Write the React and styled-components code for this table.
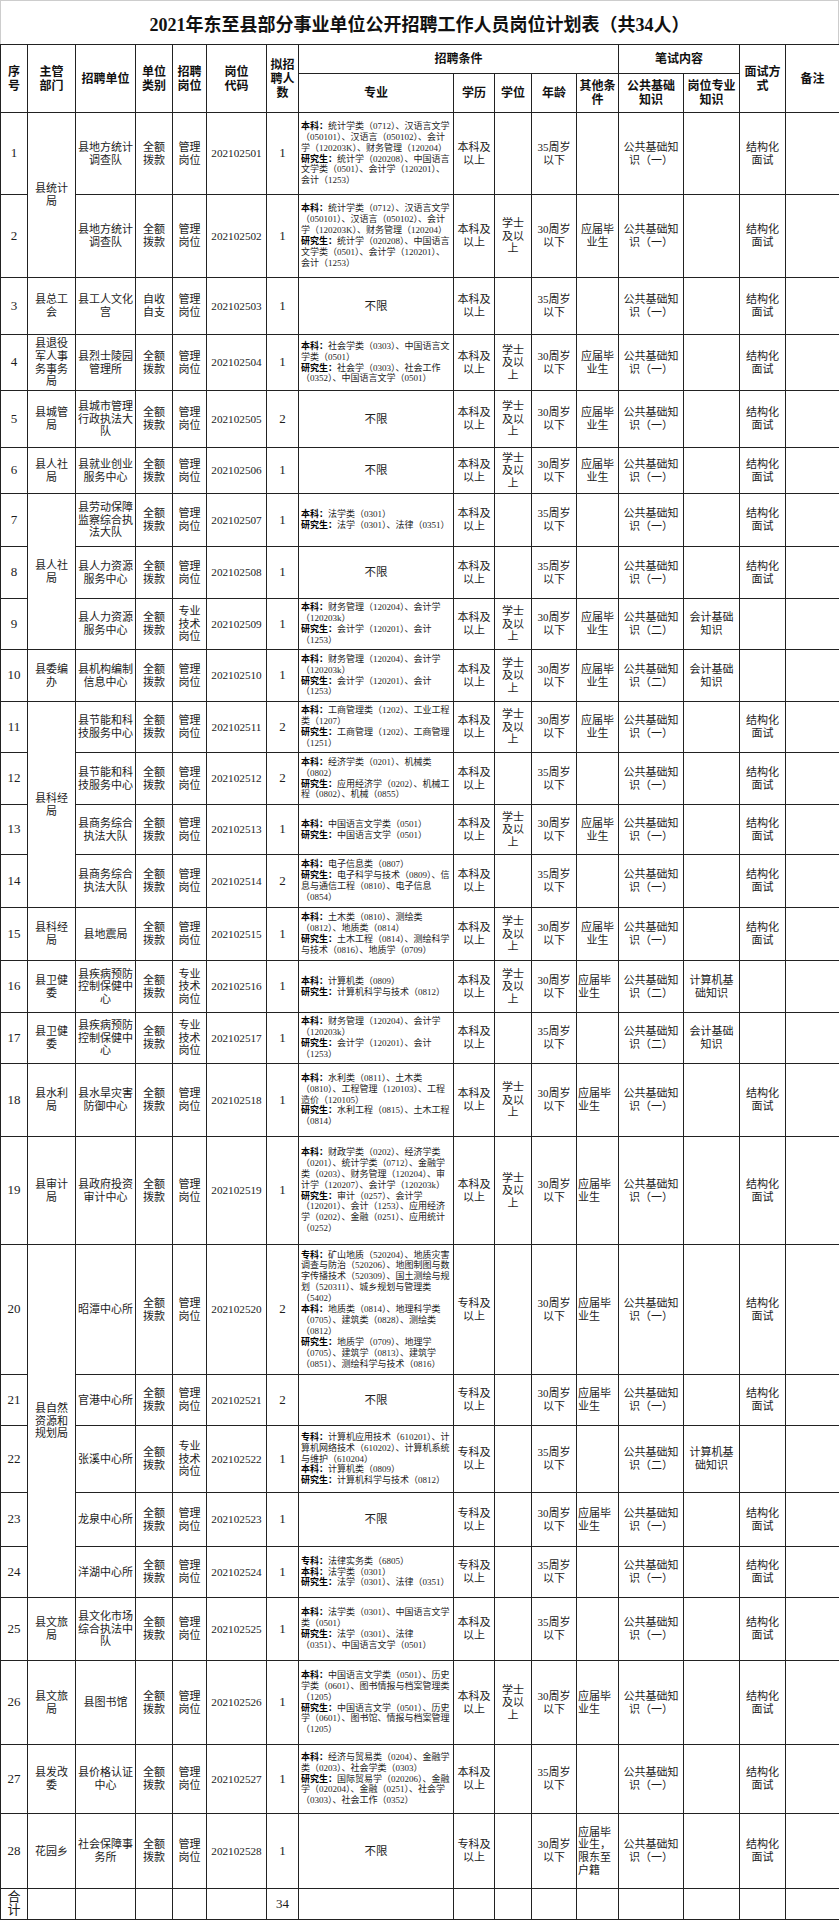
import React from 'react';
import styled, { createGlobalStyle } from 'styled-components';

const GlobalStyle = createGlobalStyle`
  body {
    margin: 0;
    background: #ffffff;
  }
`;

const Page = styled.div`
  width: 839px;
  font-family: "Liberation Serif", "Noto Sans CJK SC", serif;
  color: #1c1c1c;
`;

const Title = styled.div`
  height: 44px;
  box-sizing: border-box;
  border: 1px solid #cdcdcd;
  border-bottom: none;
  display: flex;
  align-items: center;
  justify-content: center;
  font-size: 18px;
  font-weight: 700;
  color: #111;
`;

const Table = styled.table`
  width: 839px;
  border-collapse: collapse;
  table-layout: fixed;
`;

const Row = styled.tr`
  height: ${p => p.$h}px;
`;

const HeadCell = styled.th`
  border: 1px solid #222;
  padding: 0 1px;
  font-size: 12px;
  line-height: 14px;
  font-weight: 700;
  text-align: center;
  vertical-align: middle;
  white-space: pre-line;
  color: #111;
`;

const Cell = styled.td`
  border: 1px solid #222;
  padding: 0 1px;
  font-size: 11px;
  line-height: 12.6px;
  text-align: ${p => (p.$left ? 'left' : 'center')};
  vertical-align: middle;
  white-space: pre-line;
  overflow: hidden;
`;

const NumCell = styled(Cell)`
  font-size: 13px;
`;

const CodeCell = styled(Cell)`
  font-size: 11.2px;
  padding: 0;
  white-space: nowrap;
`;

const MajorCell = styled.td`
  border: 1px solid #222;
  padding: 0 2px;
  font-size: 9px;
  line-height: 10.9px;
  text-align: ${p => (p.$free ? 'center' : 'left')};
  vertical-align: middle;
  overflow: hidden;
  ${p => p.$free && 'font-size: 11.5px;'}
`;

const Label = styled.b`
  font-weight: 700;
  color: #000;
`;

const cols = [27, 48, 60, 37, 34, 60, 32, 155, 41, 37, 45, 42, 65, 56, 46, 54];

const QE = '全额\n拨款';
const GL = '管理\n岗位';
const ZJ = '专业\n技术\n岗位';
const BK = '本科及\n以上';
const ZK = '专科及\n以上';
const XS = '学士\n及以\n上';
const A30 = '30周岁\n以下';
const A35 = '35周岁\n以下';
const YJ = '应届毕\n业生';
const P1 = '公共基础知\n识（一）';
const P2 = '公共基础知\n识（二）';
const IV = '结构化\n面试';

const rows = [
  { h: 82, dept: '县统计\n局', span: 2, unit: '县地方统计\n调查队', kind: QE, post: GL, num: 1,
    major: [['本科：', '统计学类（0712）、汉语言文学（050101）、汉语言（050102）、会计学（120203K）、财务管理（120204）'], ['研究生：', '统计学（020208）、中国语言文学类（0501）、会计学（120201）、会计（1253）']],
    edu: BK, deg: '', age: A35, other: '', pub: P1, prof: '', iv: IV },
  { h: 83, unit: '县地方统计\n调查队', kind: QE, post: GL, num: 1,
    major: [['本科：', '统计学类（0712）、汉语言文学（050101）、汉语言（050102）、会计学（120203K）、财务管理（120204）'], ['研究生：', '统计学（020208）、中国语言文学类（0501）、会计学（120201）、会计（1253）']],
    edu: BK, deg: XS, age: A30, other: YJ, pub: P1, prof: '', iv: IV },
  { h: 57, dept: '县总工\n会', unit: '县工人文化\n宫', kind: '自收\n自支', post: GL, num: 1, major: '不限',
    edu: BK, deg: '', age: A35, other: '', pub: P1, prof: '', iv: IV },
  { h: 56, dept: '县退役\n军人事\n务事务\n局', unit: '县烈士陵园\n管理所', kind: QE, post: GL, num: 1,
    major: [['本科：', '社会学类（0303）、中国语言文学类（0501）'], ['研究生：', '社会学（0303）、社会工作（0352）、中国语言文学（0501）']],
    edu: BK, deg: XS, age: A30, other: YJ, pub: P1, prof: '', iv: IV },
  { h: 57, dept: '县城管\n局', unit: '县城市管理\n行政执法大\n队', kind: QE, post: GL, num: 2, major: '不限',
    edu: BK, deg: XS, age: A30, other: YJ, pub: P1, prof: '', iv: IV },
  { h: 46, dept: '县人社\n局', unit: '县就业创业\n服务中心', kind: QE, post: GL, num: 1, major: '不限',
    edu: BK, deg: XS, age: A30, other: YJ, pub: P1, prof: '', iv: IV },
  { h: 53, dept: '县人社\n局', span: 3, unit: '县劳动保障\n监察综合执\n法大队', kind: QE, post: GL, num: 1,
    major: [['本科：', '法学类（0301）'], ['研究生：', '法学（0301）、法律（0351）']],
    edu: BK, deg: '', age: A35, other: '', pub: P1, prof: '', iv: IV },
  { h: 52, unit: '县人力资源\n服务中心', kind: QE, post: GL, num: 1, major: '不限',
    edu: BK, deg: '', age: A35, other: '', pub: P1, prof: '', iv: IV },
  { h: 51, unit: '县人力资源\n服务中心', kind: QE, post: ZJ, num: 1,
    major: [['本科：', '财务管理（120204）、会计学（120203k）'], ['研究生：', '会计学（120201）、会计（1253）']],
    edu: BK, deg: XS, age: A30, other: YJ, pub: P2, prof: '会计基础\n知识', iv: '' },
  { h: 52, dept: '县委编\n办', unit: '县机构编制\n信息中心', kind: QE, post: GL, num: 1,
    major: [['本科：', '财务管理（120204）、会计学（120203k）'], ['研究生：', '会计学（120201）、会计（1253）']],
    edu: BK, deg: XS, age: A30, other: YJ, pub: P2, prof: '会计基础\n知识', iv: '' },
  { h: 51, dept: '县科经\n局', span: 4, unit: '县节能和科\n技服务中心', kind: QE, post: GL, num: 2,
    major: [['本科：', '工商管理类（1202）、工业工程类（1207）'], ['研究生：', '工商管理（1202）、工商管理（1251）']],
    edu: BK, deg: XS, age: A30, other: YJ, pub: P1, prof: '', iv: IV },
  { h: 52, unit: '县节能和科\n技服务中心', kind: QE, post: GL, num: 2,
    major: [['本科：', '经济学类（0201）、机械类（0802）'], ['研究生：', '应用经济学（0202）、机械工程（0802）、机械（0855）']],
    edu: BK, deg: '', age: A35, other: '', pub: P1, prof: '', iv: IV },
  { h: 50, unit: '县商务综合\n执法大队', kind: QE, post: GL, num: 1,
    major: [['本科：', '中国语言文学类（0501）'], ['研究生：', '中国语言文学（0501）']],
    edu: BK, deg: XS, age: A30, other: YJ, pub: P1, prof: '', iv: IV },
  { h: 53, unit: '县商务综合\n执法大队', kind: QE, post: GL, num: 2,
    major: [['本科：', '电子信息类（0807）'], ['研究生：', '电子科学与技术（0809）、信息与通信工程（0810）、电子信息（0854）']],
    edu: BK, deg: '', age: A35, other: '', pub: P1, prof: '', iv: IV },
  { h: 53, dept: '县科经\n局', unit: '县地震局', kind: QE, post: GL, num: 1,
    major: [['本科：', '土木类（0810）、测绘类（0812）、地质类（0814）'], ['研究生：', '土木工程（0814）、测绘科学与技术（0816）、地质学（0709）']],
    edu: BK, deg: XS, age: A30, other: YJ, pub: P1, prof: '', iv: IV },
  { h: 52, dept: '县卫健\n委', unit: '县疾病预防\n控制保健中\n心', kind: QE, post: ZJ, num: 1,
    major: [['本科：', '计算机类（0809）'], ['研究生：', '计算机科学与技术（0812）']],
    edu: BK, deg: XS, age: A30, other: YJ, left: true, pub: P2, prof: '计算机基\n础知识', iv: '' },
  { h: 51, dept: '县卫健\n委', unit: '县疾病预防\n控制保健中\n心', kind: QE, post: ZJ, num: 1,
    major: [['本科：', '财务管理（120204）、会计学（120203k）'], ['研究生：', '会计学（120201）、会计（1253）']],
    edu: BK, deg: '', age: A35, other: '', pub: P2, prof: '会计基础\n知识', iv: '' },
  { h: 73, dept: '县水利\n局', unit: '县水旱灾害\n防御中心', kind: QE, post: GL, num: 1,
    major: [['本科：', '水利类（0811）、土木类（0810）、工程管理（120103）、工程造价（120105）'], ['研究生：', '水利工程（0815）、土木工程（0814）']],
    edu: BK, deg: XS, age: A30, other: YJ, left: true, pub: P1, prof: '', iv: IV },
  { h: 108, dept: '县审计\n局', unit: '县政府投资\n审计中心', kind: QE, post: GL, num: 1,
    major: [['本科：', '财政学类（0202）、经济学类（0201）、统计学类（0712）、金融学类（0203）、财务管理（120204）、审计学（120207）、会计学（120203k）'], ['研究生：', '审计（0257）、会计学（120201）、会计（1253）、应用经济学（0202）、金融（0251）、应用统计（0252）']],
    edu: BK, deg: XS, age: A30, other: YJ, left: true, pub: P1, prof: '', iv: IV },
  { h: 130, dept: '县自然\n资源和\n规划局', span: 5, unit: '昭潭中心所', kind: QE, post: GL, num: 2,
    major: [['专科：', '矿山地质（520204）、地质灾害调查与防治（520206）、地图制图与数字传播技术（520309）、国土测绘与规划（520311）、城乡规划与管理类（5402）'], ['本科：', '地质类（0814）、地理科学类（0705）、建筑类（0828）、测绘类（0812）'], ['研究生：', '地质学（0709）、地理学（0705）、建筑学（0813）、建筑学（0851）、测绘科学与技术（0816）']],
    edu: ZK, deg: '', age: A30, other: YJ, left: true, pub: P1, prof: '', iv: IV },
  { h: 51, unit: '官港中心所', kind: QE, post: GL, num: 2, major: '不限',
    edu: ZK, deg: '', age: A30, other: YJ, left: true, pub: P1, prof: '', iv: IV },
  { h: 67, unit: '张溪中心所', kind: QE, post: ZJ, num: 1,
    major: [['专科：', '计算机应用技术（610201）、计算机网络技术（610202）、计算机系统与维护（610204）'], ['本科：', '计算机类（0809）'], ['研究生：', '计算机科学与技术（0812）']],
    edu: ZK, deg: '', age: A35, other: '', pub: P2, prof: '计算机基\n础知识', iv: '' },
  { h: 54, unit: '龙泉中心所', kind: QE, post: GL, num: 1, major: '不限',
    edu: ZK, deg: '', age: A30, other: YJ, left: true, pub: P1, prof: '', iv: IV },
  { h: 51, unit: '洋湖中心所', kind: QE, post: GL, num: 1,
    major: [['专科：', '法律实务类（6805）'], ['本科：', '法学类（0301）'], ['研究生：', '法学（0301）、法律（0351）']],
    edu: ZK, deg: '', age: A35, other: '', pub: P1, prof: '', iv: IV },
  { h: 63, dept: '县文旅\n局', unit: '县文化市场\n综合执法中\n队', kind: QE, post: GL, num: 1,
    major: [['本科：', '法学类（0301）、中国语言文学类（0501）'], ['研究生：', '法学（0301）、法律（0351）、中国语言文学（0501）']],
    edu: BK, deg: '', age: A35, other: '', pub: P1, prof: '', iv: IV },
  { h: 84, dept: '县文旅\n局', unit: '县图书馆', kind: QE, post: GL, num: 1,
    major: [['本科：', '中国语言文学类（0501）、历史学类（0601）、图书情报与档案管理类（1205）'], ['研究生：', '中国语言文学（0501）、历史学（0601）、图书馆、情报与档案管理（1205）']],
    edu: BK, deg: XS, age: A30, other: YJ, left: true, pub: P1, prof: '', iv: IV },
  { h: 69, dept: '县发改\n委', unit: '县价格认证\n中心', kind: QE, post: GL, num: 1,
    major: [['本科：', '经济与贸易类（0204）、金融学类（0203）、社会学类（0303）'], ['研究生：', '国际贸易学（020206）、金融学（020204）、金融（0251）、社会学（0303）、社会工作（0352）']],
    edu: BK, deg: '', age: A35, other: '', pub: P1, prof: '', iv: IV },
  { h: 75, dept: '花园乡', unit: '社会保障事\n务所', kind: QE, post: GL, num: 1, major: '不限',
    edu: ZK, deg: '', age: A30, other: '应届毕\n业生，\n限东至\n户籍', left: true, pub: P1, prof: '', iv: IV },
];

const Major = ({ value }) => {
  if (typeof value === 'string') return <MajorCell $free>{value}</MajorCell>;
  return (
    <MajorCell>
      {value.map(([label, text]) => (
        <div key={label}>
          <Label>{label}</Label>
          {text}
        </div>
      ))}
    </MajorCell>
  );
};

const App = () => (
  <Page>
    <GlobalStyle />
    <Title>2021年东至县部分事业单位公开招聘工作人员岗位计划表（共34人）</Title>
    <Table>
      <colgroup>
        {cols.map((w, i) => <col key={i} style={{ width: w }} />)}
      </colgroup>
      <thead>
        <Row $h={29}>
          <HeadCell rowSpan={2}>{'序\n号'}</HeadCell>
          <HeadCell rowSpan={2}>{'主管\n部门'}</HeadCell>
          <HeadCell rowSpan={2}>招聘单位</HeadCell>
          <HeadCell rowSpan={2}>{'单位\n类别'}</HeadCell>
          <HeadCell rowSpan={2}>{'招聘\n岗位'}</HeadCell>
          <HeadCell rowSpan={2}>{'岗位\n代码'}</HeadCell>
          <HeadCell rowSpan={2}>{'拟招\n聘人\n数'}</HeadCell>
          <HeadCell colSpan={5}>招聘条件</HeadCell>
          <HeadCell colSpan={2}>笔试内容</HeadCell>
          <HeadCell rowSpan={2}>{'面试方\n式'}</HeadCell>
          <HeadCell rowSpan={2}>备注</HeadCell>
        </Row>
        <Row $h={39}>
          <HeadCell>专业</HeadCell>
          <HeadCell>学历</HeadCell>
          <HeadCell>学位</HeadCell>
          <HeadCell>年龄</HeadCell>
          <HeadCell>{'其他条\n件'}</HeadCell>
          <HeadCell>{'公共基础\n知识'}</HeadCell>
          <HeadCell>{'岗位专业\n知识'}</HeadCell>
        </Row>
      </thead>
      <tbody>
        {rows.map((r, i) => (
          <Row key={i} $h={r.h}>
            <NumCell>{i + 1}</NumCell>
            {r.dept && <Cell rowSpan={r.span || 1}>{r.dept}</Cell>}
            <Cell>{r.unit}</Cell>
            <Cell>{r.kind}</Cell>
            <Cell>{r.post}</Cell>
            <CodeCell>{`2021025${String(i + 1).padStart(2, '0')}`}</CodeCell>
            <NumCell>{r.num}</NumCell>
            <Major value={r.major} />
            <Cell>{r.edu}</Cell>
            <Cell>{r.deg}</Cell>
            <Cell>{r.age}</Cell>
            <Cell $left={r.left}>{r.other}</Cell>
            <Cell>{r.pub}</Cell>
            <Cell>{r.prof}</Cell>
            <Cell>{r.iv}</Cell>
            <Cell />
          </Row>
        ))}
        <Row $h={31}>
          <NumCell>{'合\n计'}</NumCell>
          <Cell />
          <Cell />
          <Cell />
          <Cell />
          <Cell />
          <NumCell>34</NumCell>
          <Cell />
          <Cell />
          <Cell />
          <Cell />
          <Cell />
          <Cell />
          <Cell />
          <Cell />
          <Cell />
        </Row>
      </tbody>
    </Table>
  </Page>
);

export default App;
